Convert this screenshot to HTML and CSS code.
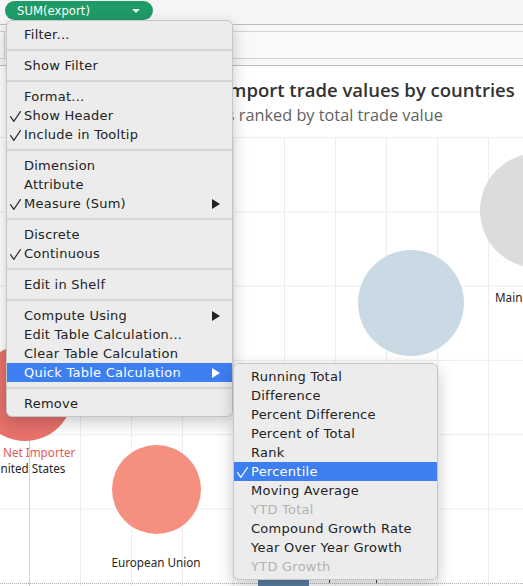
FILE: index.html
```html
<!DOCTYPE html>
<html lang="en">
<head>
<meta charset="utf-8">
<title>Quick Table Calculation menu</title>
<link rel="stylesheet" href="styles.css">
</head>
<body>
<div class="page">
  <div class="topbar">
    <div class="pill"><span class="pill-text">SUM(export)</span><span class="pill-caret"></span></div>
  </div>
  <div class="shelf"><div class="shelf-row"><div class="shelf-cap"></div></div></div>
  <div class="header">
    <div class="title">Top export and import trade values by countries</div>
    <div class="subtitle">Top trading partners ranked by total trade value</div>
  </div>
  <div class="chart">
    <div class="axis-v"></div>
    <div class="axis-h"></div>
    <div class="mark mark-gray" style="left:480px;top:16px;width:115px;height:115px"></div>
    <div class="mark mark-blue" style="left:358px;top:113px;width:106px;height:106px"></div>
    <div class="mark mark-us" style="left:-23px;top:208px;width:96px;height:96px"></div>
    <div class="mark mark-eu" style="left:112px;top:308px;width:89px;height:89px"></div>
    <div class="bar" style="left:258px;top:440px;width:51px;height:12px"></div>
    <div class="tick" style="left:329px;top:442px"></div>
    <div class="tick" style="left:376px;top:442px"></div>
    <div class="label" style="left:495px;top:152px">Mainland China</div>
    <div class="label label-red" style="left:3px;top:307px">Net Importer</div>
    <div class="label" style="left:-8px;top:323px">United States</div>
    <div class="label label-center" style="left:156px;top:417px">European Union</div>
  </div>

  <div class="menu main-menu">
    <div class="mi">Filter...</div>
    <div class="sep"></div>
    <div class="mi">Show Filter</div>
    <div class="sep"></div>
    <div class="mi">Format...</div>
    <div class="mi"><svg class="chk" viewBox="0 0 11 11" width="11" height="11"><polyline points="0.6,5.6 3.8,10.4 10.4,0.6"/></svg>Show Header</div>
    <div class="mi"><svg class="chk" viewBox="0 0 11 11" width="11" height="11"><polyline points="0.6,5.6 3.8,10.4 10.4,0.6"/></svg>Include in Tooltip</div>
    <div class="sep"></div>
    <div class="mi">Dimension</div>
    <div class="mi">Attribute</div>
    <div class="mi"><svg class="chk" viewBox="0 0 11 11" width="11" height="11"><polyline points="0.6,5.6 3.8,10.4 10.4,0.6"/></svg>Measure (Sum)<span class="arrow"></span></div>
    <div class="sep"></div>
    <div class="mi">Discrete</div>
    <div class="mi"><svg class="chk" viewBox="0 0 11 11" width="11" height="11"><polyline points="0.6,5.6 3.8,10.4 10.4,0.6"/></svg>Continuous</div>
    <div class="sep"></div>
    <div class="mi">Edit in Shelf</div>
    <div class="sep"></div>
    <div class="mi">Compute Using<span class="arrow"></span></div>
    <div class="mi">Edit Table Calculation...</div>
    <div class="mi">Clear Table Calculation</div>
    <div class="mi mi-active">Quick Table Calculation<span class="arrow"></span></div>
    <div class="sep"></div>
    <div class="mi">Remove</div>
  </div>

  <div class="menu sub-menu">
    <div class="mi">Running Total</div>
    <div class="mi">Difference</div>
    <div class="mi">Percent Difference</div>
    <div class="mi">Percent of Total</div>
    <div class="mi">Rank</div>
    <div class="mi mi-active"><svg class="chk" viewBox="0 0 11 11" width="11" height="11"><polyline points="0.6,5.6 3.8,10.4 10.4,0.6"/></svg>Percentile</div>
    <div class="mi">Moving Average</div>
    <div class="mi mi-disabled">YTD Total</div>
    <div class="mi">Compound Growth Rate</div>
    <div class="mi">Year Over Year Growth</div>
    <div class="mi mi-disabled">YTD Growth</div>
  </div>
</div>
</body>
</html>
```

FILE: styles.css
```css
* { box-sizing: border-box; }
html, body { margin: 0; padding: 0; }
body {
  width: 523px;
  height: 586px;
  overflow: hidden;
  background: #ffffff;
  font-family: "DejaVu Sans", "Liberation Sans", sans-serif;
}
.page {
  position: relative;
  width: 523px;
  height: 586px;
  overflow: hidden;
}

/* top pill bar */
.topbar {
  height: 25px;
  padding: 1px 0 0 5px;
  background: #f6f6f6;
  border-bottom: 1px solid #bdbdbd;
}
.pill {
  width: 148px;
  height: 19px;
  border-radius: 10px;
  background: #1f9b69;
  display: flex;
  align-items: center;
  padding-left: 12px;
}
.pill-text {
  color: #ffffff;
  font-size: 11.5px;
  letter-spacing: 0.1px;
}
.pill-caret {
  margin-left: auto;
  margin-right: 13px;
  width: 0;
  height: 0;
  border-left: 4px solid transparent;
  border-right: 4px solid transparent;
  border-top: 4px solid #e8f5ef;
}

/* shelf band */
.shelf {
  height: 41px;
  padding: 6px 0;
  background: #f7f7f7;
  border-bottom: 1px solid #bcbcbc;
}
.shelf-row {
  height: 28px;
  border-top: 1px solid #d3d3d3;
  border-bottom: 1px solid #d3d3d3;
  background: #f9f9f9;
}
.shelf-cap {
  width: 5px;
  height: 100%;
  border-right: 1px solid #cfcfcf;
}

/* chart header */
.header {
  height: 71px;
  padding-top: 12px;
  overflow: hidden;
  white-space: nowrap;
}
.title {
  margin-left: 83px;
  font-family: "Open Sans", "Noto Sans", sans-serif;
  font-weight: 600;
  font-size: 18.5px;
  line-height: 24px;
  color: #333333;
}
.subtitle {
  margin-left: 78px;
  margin-top: 3px;
  font-family: "Open Sans", "Noto Sans", sans-serif;
  font-weight: 400;
  font-size: 16.3px;
  line-height: 20px;
  color: #626262;
}

/* chart canvas */
.chart {
  position: relative;
  height: 449px;
  background-image:
    linear-gradient(to right, #ededed 1px, transparent 1px),
    linear-gradient(to bottom, #ededed 1px, transparent 1px);
  background-size: 51px 74.3px;
  background-position: 29px 0, 0 0;
}
.axis-v {
  position: absolute;
  left: 29px;
  top: 0;
  bottom: 0;
  border-left: 1px dotted #b5b5b5;
}
.axis-h {
  position: absolute;
  left: 0;
  right: 0;
  top: 446px;
  border-top: 1px dotted #b5b5b5;
}
.mark {
  position: absolute;
  border-radius: 50%;
}
.mark-gray { background: #dcdcde; }
.mark-blue { background: rgba(197, 215, 227, 0.92); }
.mark-us { background: #e8716b; }
.mark-eu { background: #f59081; }
.bar {
  position: absolute;
  background: #5b7fa4;
}
.tick {
  position: absolute;
  width: 1px;
  height: 4px;
  background: #444;
}
.label {
  position: absolute;
  font-family: "Noto Sans", "Open Sans", sans-serif;
  font-size: 11.7px;
  line-height: 16px;
  color: #262626;
  white-space: nowrap;
}
.label-red { color: #e25a58; }
.label-center { transform: translateX(-50%); }

/* menus */
.menu {
  position: absolute;
  background: #ececec;
  border: 1px solid #c6c6c6;
  border-radius: 6px;
  box-shadow: 0 5px 16px rgba(0, 0, 0, 0.22);
  font-family: "DejaVu Sans", "Liberation Sans", sans-serif;
  font-size: 13px;
  letter-spacing: 0.25px;
  color: #222222;
}
.main-menu {
  left: 6px;
  top: 20px;
  width: 227px;
  padding: 4px 0 3px;
}
.sub-menu {
  left: 233px;
  top: 363px;
  width: 205px;
  padding: 3px 0 3px;
}
.mi {
  position: relative;
  height: 19px;
  line-height: 19px;
  padding-left: 17px;
  white-space: nowrap;
}
.mi-active {
  background: #3d7ef1;
  color: #ffffff;
}
.mi-disabled { color: #b3b3b3; }
.chk {
  position: absolute;
  left: 3px;
  top: 5px;
  fill: none;
  stroke: #2a2a2a;
  stroke-width: 1.15;
  stroke-linecap: round;
  stroke-linejoin: round;
}
.mi-active .chk { stroke: #ffffff; }
.arrow {
  position: absolute;
  right: 12px;
  top: 5px;
  width: 0;
  height: 0;
  border-top: 5px solid transparent;
  border-bottom: 5px solid transparent;
  border-left: 8px solid #222222;
}
.mi-active .arrow { border-left-color: #ffffff; }
.sep {
  height: 2px;
  margin: 5px 0;
  background: #d6d6d6;
}
```
